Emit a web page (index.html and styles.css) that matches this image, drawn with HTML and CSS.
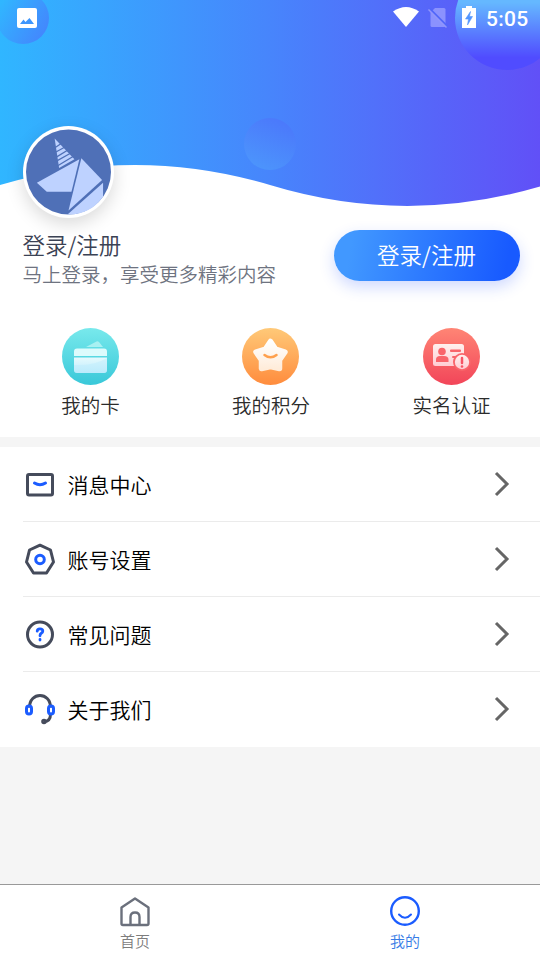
FILE: index.html
```html
<!DOCTYPE html>
<html lang="zh-CN">
<head>
<meta charset="utf-8">
<title>我的</title>
<link rel="stylesheet" href="styles.css">
</head>
<body>
<div class="app">
  <svg class="hero" viewBox="0 0 540 220">
    <defs>
      <linearGradient id="sky"><stop stop-color="#30b6ff"/><stop offset=".5" stop-color="#4785fc"/><stop offset="1" stop-color="#6150f7"/></linearGradient>
      <linearGradient id="orbA" x1="0" y1=".15" x2="1" y2=".75"><stop offset=".1" stop-color="#31b5ff"/><stop offset="1" stop-color="#4485fd"/></linearGradient>
      <linearGradient id="orbB" x1="0" y1="0" x2="0" y2="1"><stop offset=".35" stop-color="#65b8ff"/><stop offset=".88" stop-color="#504cff"/></linearGradient>
      <linearGradient id="orbC" x1=".2" y1="1" x2=".7" y2="0"><stop stop-color="#4c96fc"/><stop offset="1" stop-color="#4b78fb"/></linearGradient>
    </defs>
    <path fill="url(#sky)" d="M0 0H540V186.500Q405 226 270 185Q135 145 0 185Z"/>
    <circle cx="23" cy="18" r="26" fill="url(#orbA)"/>
    <circle cx="507" cy="18" r="52" fill="url(#orbB)"/>
    <circle cx="270" cy="144" r="26" fill="url(#orbC)"/>
  </svg>

  <header class="status">
    <svg class="status-photo" viewBox="0 0 20 20"><rect width="20" height="20" rx="2" fill="#fff"/><path d="M3 16L6.500 11.500L8.500 14L12.500 10L17 16Z" fill="#3e96fd"/></svg>
    <svg class="status-icons" viewBox="0 0 84 24">
      <path d="M0 5.500Q13-3.500 26 5.500L13 21Z" fill="#fff"/>
      <path d="M42 2H51Q52.500 2 52.500 3.500V19.500Q52.500 21 51 21H39Q37.500 21 37.500 19.500V6.500Z" fill="#989eff" opacity=".8"/>
      <path d="M36.500 2.500L54.500 20.500" stroke="#5066f9" stroke-width="2"/>
      <path d="M35.500 3.500L53.500 21.500" stroke="#9296fb" stroke-width="1.500"/>
      <path d="M73 0H79V2H83V22H69V2H73Z" fill="#fff"/>
      <path d="M77.500 5.500L72.500 13H75.500L74.500 19L79.500 10.500H76.500Z" fill="#5295ff" stroke="#5295ff" stroke-width=".6"/>
    </svg>
    <span class="clock">5:05</span>
  </header>

  <main>
    <section class="profile">
      <div class="avatar">
        <svg viewBox="0 0 86 86">
          <circle cx="43" cy="43" r="43" fill="#4f70b7"/>
          <g fill="#bed2ff"><path d="M29 9L49 30L33.500 39Z"/><path d="M11 54L54 30L46 63H21Z"/><path d="M56 29L77 51L43 82Z"/><path d="M42 86L78 54V68Q65 86 43 86Z"/></g>
          <path d="M27 20L36 14M28 24L39 18M29 29L42 21M29 33L45 24M30 38L48 27" stroke="#4f70b7" stroke-width="1.300"/>
        </svg>
      </div>
      <div class="account">
        <div><h1>登录/注册</h1><p>马上登录，享受更多精彩内容</p></div>
        <button class="login">登录/注册</button>
      </div>
    </section>

    <nav class="shortcuts">
      <a class="shortcut">
        <svg viewBox="0 0 57 57">
          <defs><linearGradient id="teal" x2="0" y2="1"><stop stop-color="#78e9ec"/><stop offset="1" stop-color="#39c8d9"/></linearGradient><linearGradient id="ice" x2="0" y2="1"><stop stop-color="#e6fafd"/><stop offset="1" stop-color="#bcebfc"/></linearGradient></defs>
          <circle cx="28.500" cy="28.500" r="28.500" fill="url(#teal)"/>
          <path d="M24 19L34.500 13.500Q36 13 37 14L41 19Z" fill="#a9f1f2"/>
          <path d="M15 20.500H42Q45 20.500 45 23.500V28H12V23.500Q12 20.500 15 20.500Z" fill="#dcfbfc"/>
          <path d="M12 29.500H45V42Q45 45 42 45H15Q12 45 12 42Z" fill="url(#ice)"/>
          <path d="M12 37Q32 38 45 30V42Q45 45 42 45H15Q12 45 12 42Z" fill="#b8eafd" opacity=".4"/>
        </svg>
        <span>我的卡</span>
      </a>
      <a class="shortcut">
        <svg viewBox="0 0 57 57">
          <defs><linearGradient id="amber" x2="0" y2="1"><stop stop-color="#ffc978"/><stop offset="1" stop-color="#ff8c3d"/></linearGradient><linearGradient id="cream" x2="0" y2="1"><stop stop-color="#fff"/><stop offset="1" stop-color="#ffecda"/></linearGradient></defs>
          <circle cx="28.500" cy="28.500" r="28.500" fill="url(#amber)"/>
          <path d="M28.500 13.500L33.500 21L43 24L37.500 32L37.500 40.500L28.500 38.500L19.500 40.500L19.500 32L14 24L23.500 21Z" fill="url(#cream)" stroke="url(#cream)" stroke-width="5.500" stroke-linejoin="round"/>
          <path d="M22.500 27Q28.500 31.500 34.500 27" fill="none" stroke="#ffa04d" stroke-width="2.500" stroke-linecap="round"/>
        </svg>
        <span>我的积分</span>
      </a>
      <a class="shortcut">
        <svg viewBox="0 0 57 57">
          <defs><linearGradient id="coral" x2="0" y2="1"><stop stop-color="#ff8575"/><stop offset="1" stop-color="#f24559"/></linearGradient><linearGradient id="blush" x2="0" y2="1"><stop stop-color="#fff0ee"/><stop offset="1" stop-color="#ffcdd3"/></linearGradient></defs>
          <circle cx="28.500" cy="28.500" r="28.500" fill="url(#coral)"/>
          <rect x="10" y="16" width="31" height="22" rx="2.500" fill="url(#blush)"/>
          <g fill="#f9646a"><circle cx="19" cy="23.500" r="3.800"/><path d="M13 34V31.500Q13 28 17 28H21Q25.500 28 25.500 31.500V34Z"/><rect x="27" y="21.500" width="11" height="2.500" rx="1"/><rect x="29" y="28" width="6" height="2" rx="1"/><circle cx="39" cy="34" r="9"/></g>
          <circle cx="39" cy="34" r="7.200" fill="url(#blush)"/>
          <path d="M39 30V35" stroke="#f75364" stroke-width="2.500" stroke-linecap="round"/><circle cx="39" cy="38.500" r="1.300" fill="#f75364"/>
        </svg>
        <span>实名认证</span>
      </a>
    </nav>

    <ul class="menu">
      <li>
        <svg class="icon" viewBox="0 0 32 32"><rect x="3.500" y="5.500" width="25" height="20.500" rx="1.500"/><path class="accent" d="M10.500 14Q16 17.500 21.500 14"/></svg>
        <span>消息中心</span><svg class="arrow" viewBox="0 0 16 26"><path d="M2 2L13 13L2 24"/></svg>
      </li>
      <li>
        <svg class="icon" viewBox="0 0 32 32"><path d="M16 1.200L26.500 6L29.500 18L22.500 29H9.500L2.500 18L5.500 6Z"/><circle class="accent" cx="16" cy="15.500" r="4.300"/></svg>
        <span>账号设置</span><svg class="arrow" viewBox="0 0 16 26"><path d="M2 2L13 13L2 24"/></svg>
      </li>
      <li>
        <svg class="icon" viewBox="0 0 32 32"><circle cx="16" cy="15.500" r="12.500"/><path class="accent question" d="M13.200 12.200Q13.200 9.800 16 9.800Q18.800 9.800 18.800 12Q18.800 13.300 17.300 14.200Q16 15 16 16.800M16 20.500V21"/></svg>
        <span>常见问题</span><svg class="arrow" viewBox="0 0 16 26"><path d="M2 2L13 13L2 24"/></svg>
      </li>
      <li>
        <svg class="icon" viewBox="0 0 32 32"><path d="M5.500 13.500C5.500-2.500 26.500-2.500 26.500 13.500M26.500 20Q26.500 27.500 20 27.500"/><circle cx="20" cy="27.500" r="1.300"/><rect class="accent" x="2.500" y="12" width="5" height="8" rx="2.500"/><rect class="accent" x="24.500" y="12" width="5" height="8" rx="2.500"/></svg>
        <span>关于我们</span><svg class="arrow" viewBox="0 0 16 26"><path d="M2 2L13 13L2 24"/></svg>
      </li>
    </ul>
  </main>

  <nav class="tabs">
    <a class="tab"><svg viewBox="0 0 32 32"><path d="M2.500 11.500L16 2.500L29.500 11.500V27.500Q29.500 29 28 29H4Q2.500 29 2.500 27.500ZM11.500 29V21Q11.500 16.500 16 16.500Q20.500 16.500 20.500 21V29"/></svg><span>首页</span></a>
    <a class="tab active"><svg viewBox="0 0 32 32"><circle cx="16" cy="15" r="13.800"/><path d="M10 18.500Q16 25 22 18.500" stroke-width="2" stroke-linecap="round"/></svg><span>我的</span></a>
  </nav>
</div>
</body>
</html>
```
FILE: styles.css
```css
* { box-sizing: border-box; }
body {
  margin: 0;
  background: #f5f5f5;
  font-family: "Noto Sans CJK SC", sans-serif;
  font-weight: 350;
}
svg { display: block; }
.app {
  position: relative;
  display: flex;
  flex-direction: column;
  width: 540px;
  height: 960px;
  overflow: hidden;
}
.hero {
  position: absolute;
  inset: 0 0 auto;
  width: 540px;
  height: 220px;
  background: #fff;
}
.status {
  position: relative;
  display: flex;
  align-items: center;
  height: 36px;
  padding: 0 12px 0 17px;
  color: #fff;
}
.status-photo { width: 20px; height: 20px; }
.status-icons { width: 84px; height: 24px; margin: -1px 9px 0 auto; }
.clock {
  width: 42px;
  font: 500 21px/36px Roboto, sans-serif;
  letter-spacing: .3px;
  padding-top: 2px;
  white-space: nowrap;
}
main { flex: 1; display: flex; flex-direction: column; }
.profile {
  display: flex;
  flex-direction: column;
  height: 274px;
  padding: 90px 20px 0 23px;
  background: linear-gradient(transparent 184px, #fff 184px);
}
.avatar {
  position: relative;
  width: 91px;
  height: 92px;
  padding: 3px;
  border-radius: 50%;
  background: #fff;
  box-shadow: 0 6px 18px rgba(0, 0, 0, .15);
}
.avatar svg { width: 85px; height: 86px; }
.account {
  position: relative;
  display: flex;
  justify-content: space-between;
  padding-top: 12px;
}
h1 {
  margin: 0;
  color: #3b4254;
  font-size: 22.5px;
  font-weight: inherit;
  line-height: 28px;
}
p {
  margin: 2px 0 0;
  color: #6e7380;
  font-size: 19.5px;
  line-height: 28px;
}
h1, p { text-indent: -.5px; }
.login {
  width: 186px;
  height: 51px;
  padding: 0 1px 2px 0;
  border: 0;
  border-radius: 26px;
  color: #fff;
  background: linear-gradient(100deg, #4198ff 10%, #185aff 92%);
  box-shadow: 0 6px 15px rgba(35, 83, 255, .22);
  font: 350 22.5px/49px "Noto Sans CJK SC", sans-serif;
}
.shortcuts {
  display: flex;
  justify-content: space-between;
  height: 127px;
  padding: 18px 29px 0 30px;
  background: #fff;
}
.shortcut {
  display: flex;
  flex-direction: column;
  align-items: center;
  width: 120px;
  color: #2b2b2b;
  font-size: 19.5px;
  line-height: 30px;
}
.shortcut svg { width: 57px; height: 57px; margin-bottom: 5px; }
.shortcut span { padding-left: 1px; }
.menu {
  margin: 10px 0 0;
  padding: 0 0 0 23px;
  list-style: none;
  background: #fff;
}
.menu li {
  display: flex;
  align-items: center;
  height: 75px;
  padding: 0 30px 0 1px;
  border-bottom: 1px solid #ebebeb;
  font-size: 21px;
  color: #000;
}
.menu li:last-child { border-color: #fff; }
.menu span { margin-left: -.5px; }
.icon { width: 32px; height: 32px; margin: 2px 12px 0 0; overflow: visible; }
.icon, .tab svg { fill: none; stroke: #454b5b; stroke-width: 3; stroke-linejoin: round; }
.icon .accent { stroke: #1b5cff; stroke-linecap: round; }
.icon .question { stroke-width: 2.8; }
.arrow {
  width: 16px;
  height: 26px;
  margin: 0 0 0 auto;
  fill: none;
  stroke: #666;
  stroke-width: 3;
}
.tabs {
  display: flex;
  height: 76px;
  border-top: 1px solid #999;
  background: #fff;
}
.tab {
  flex: 1;
  display: flex;
  flex-direction: column;
  align-items: center;
  padding-top: 11px;
  color: #7d7d7d;
  font-size: 15px;
  line-height: 22px;
}
.tab svg { width: 32px; height: 32px; margin-bottom: 2px; stroke: #6b707c; stroke-width: 2.4; }
.tab.active { color: #367be6; }
.tab.active svg { stroke: #1b5cff; }
```
